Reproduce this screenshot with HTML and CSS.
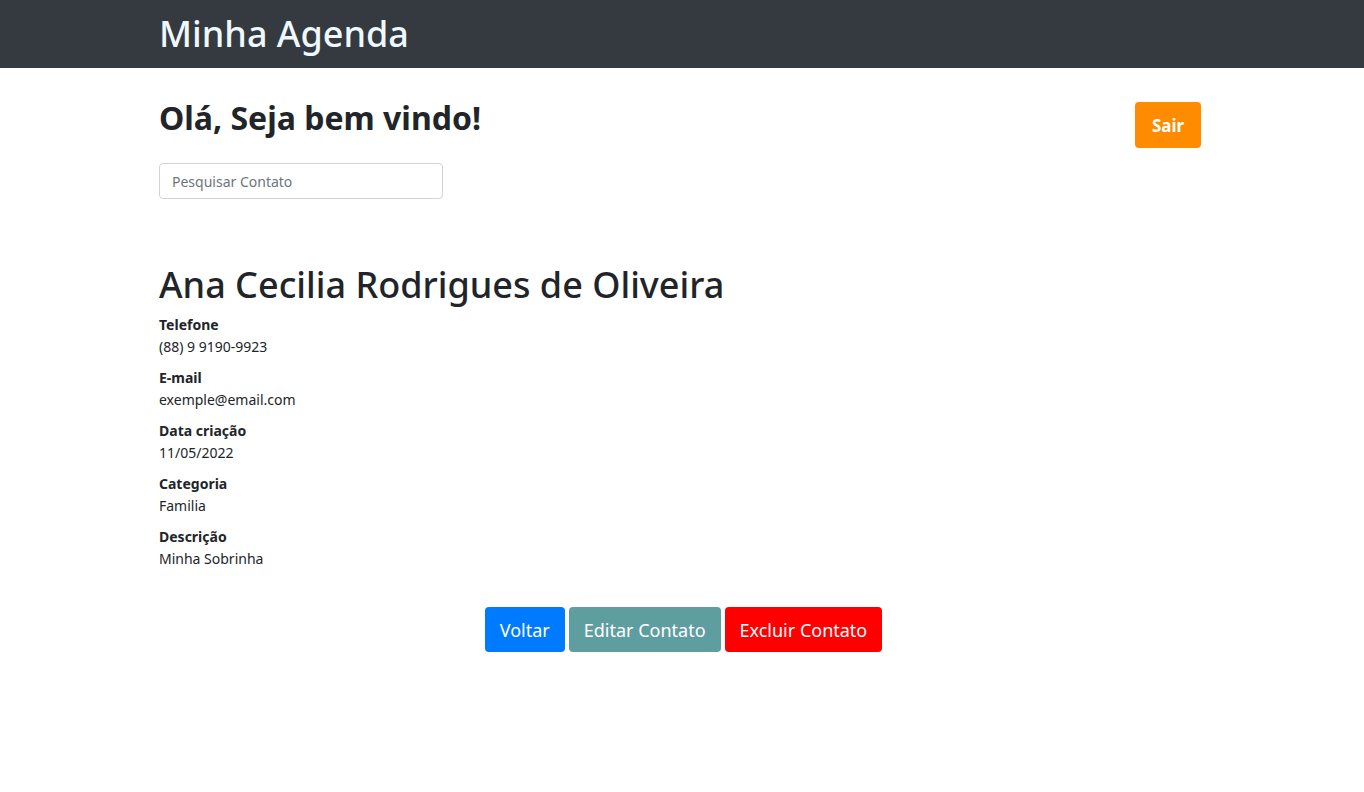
FILE: index.html
```html
<!DOCTYPE html>
<html lang="pt-BR">
<head>
<meta charset="utf-8">
<title>Minha Agenda</title>
<link rel="stylesheet" href="styles.css">
</head>
<body>
<header class="navbar">
  <div class="container">
    <span class="brand">Minha Agenda</span>
  </div>
</header>
<main class="container">
  <div class="top-row">
    <h2 class="welcome">Olá, Seja bem vindo!</h2>
    <button class="btn btn-sair">Sair</button>
  </div>
  <input class="search" type="text" placeholder="Pesquisar Contato">
  <h1 class="name">Ana Cecilia Rodrigues de Oliveira</h1>
  <dl class="details">
    <div class="field"><dt>Telefone</dt><dd>(88) 9 9190-9923</dd></div>
    <div class="field"><dt>E-mail</dt><dd>exemple@email.com</dd></div>
    <div class="field"><dt>Data criação</dt><dd>11/05/2022</dd></div>
    <div class="field"><dt>Categoria</dt><dd>Familia</dd></div>
    <div class="field"><dt>Descrição</dt><dd>Minha Sobrinha</dd></div>
  </dl>
</main>
<div class="actions">
  <button class="btn btn-lg btn-voltar">Voltar</button>
  <button class="btn btn-lg btn-editar">Editar Contato</button>
  <button class="btn btn-lg btn-excluir">Excluir Contato</button>
</div>
</body>
</html>
```
FILE: styles.css
```css
* { box-sizing: border-box; }
body {
  margin: 0;
  font-family: "Noto Sans", "Open Sans", sans-serif;
  color: #212529;
  background: #fff;
  font-size: 14px;
}
.container {
  margin: 0 163px 0 159px;
}
.navbar {
  background: #343a40;
  height: 68px;
  display: flex;
  align-items: center;
}
.navbar .container { width: 100%; }
.brand {
  color: #f0f8ff;
  font-size: 36px;
  font-weight: 500;
  line-height: 1;
  display: block;
  margin-top: -1px;
}
.top-row {
  display: flex;
  justify-content: space-between;
  align-items: flex-start;
  padding-top: 34px;
}
.welcome {
  margin: -3px 0 0;
  font-size: 32px;
  font-weight: 700;
  line-height: 1.2;
}
.btn {
  border: none;
  border-radius: 4px;
  color: #fff;
  font-family: inherit;
  cursor: pointer;
}
.btn-sair {
  background: #ff8c00;
  width: 66px;
  height: 46px;
  font-size: 17px;
  font-weight: 700;
}
.search {
  display: block;
  margin-top: 15px;
  width: 284px;
  height: 36px;
  border: 1px solid #ced4da;
  border-radius: 4px;
  padding: 0 12px;
  font-family: inherit;
  font-size: 14px;
  color: #495057;
}
.search::placeholder { color: #6c757d; }
.name {
  margin: 64px 0 8px;
  font-size: 36px;
  font-weight: 500;
  line-height: 1.2;
}
.details { margin: 0; }
.field { margin-bottom: 9px; }
dt {
  font-weight: 700;
  line-height: 22px;
}
dd {
  margin: 0;
  line-height: 22px;
}
.actions {
  display: flex;
  justify-content: center;
  gap: 4px;
  margin-top: 37px;
  padding-left: 3px;
}
.btn-lg {
  height: 45px;
  font-size: 18px;
  padding: 0 15px;
}
.btn-voltar { background: #007bff; }
.btn-editar { background: #5f9ea0; }
.btn-excluir { background: #ff0000; }
```
